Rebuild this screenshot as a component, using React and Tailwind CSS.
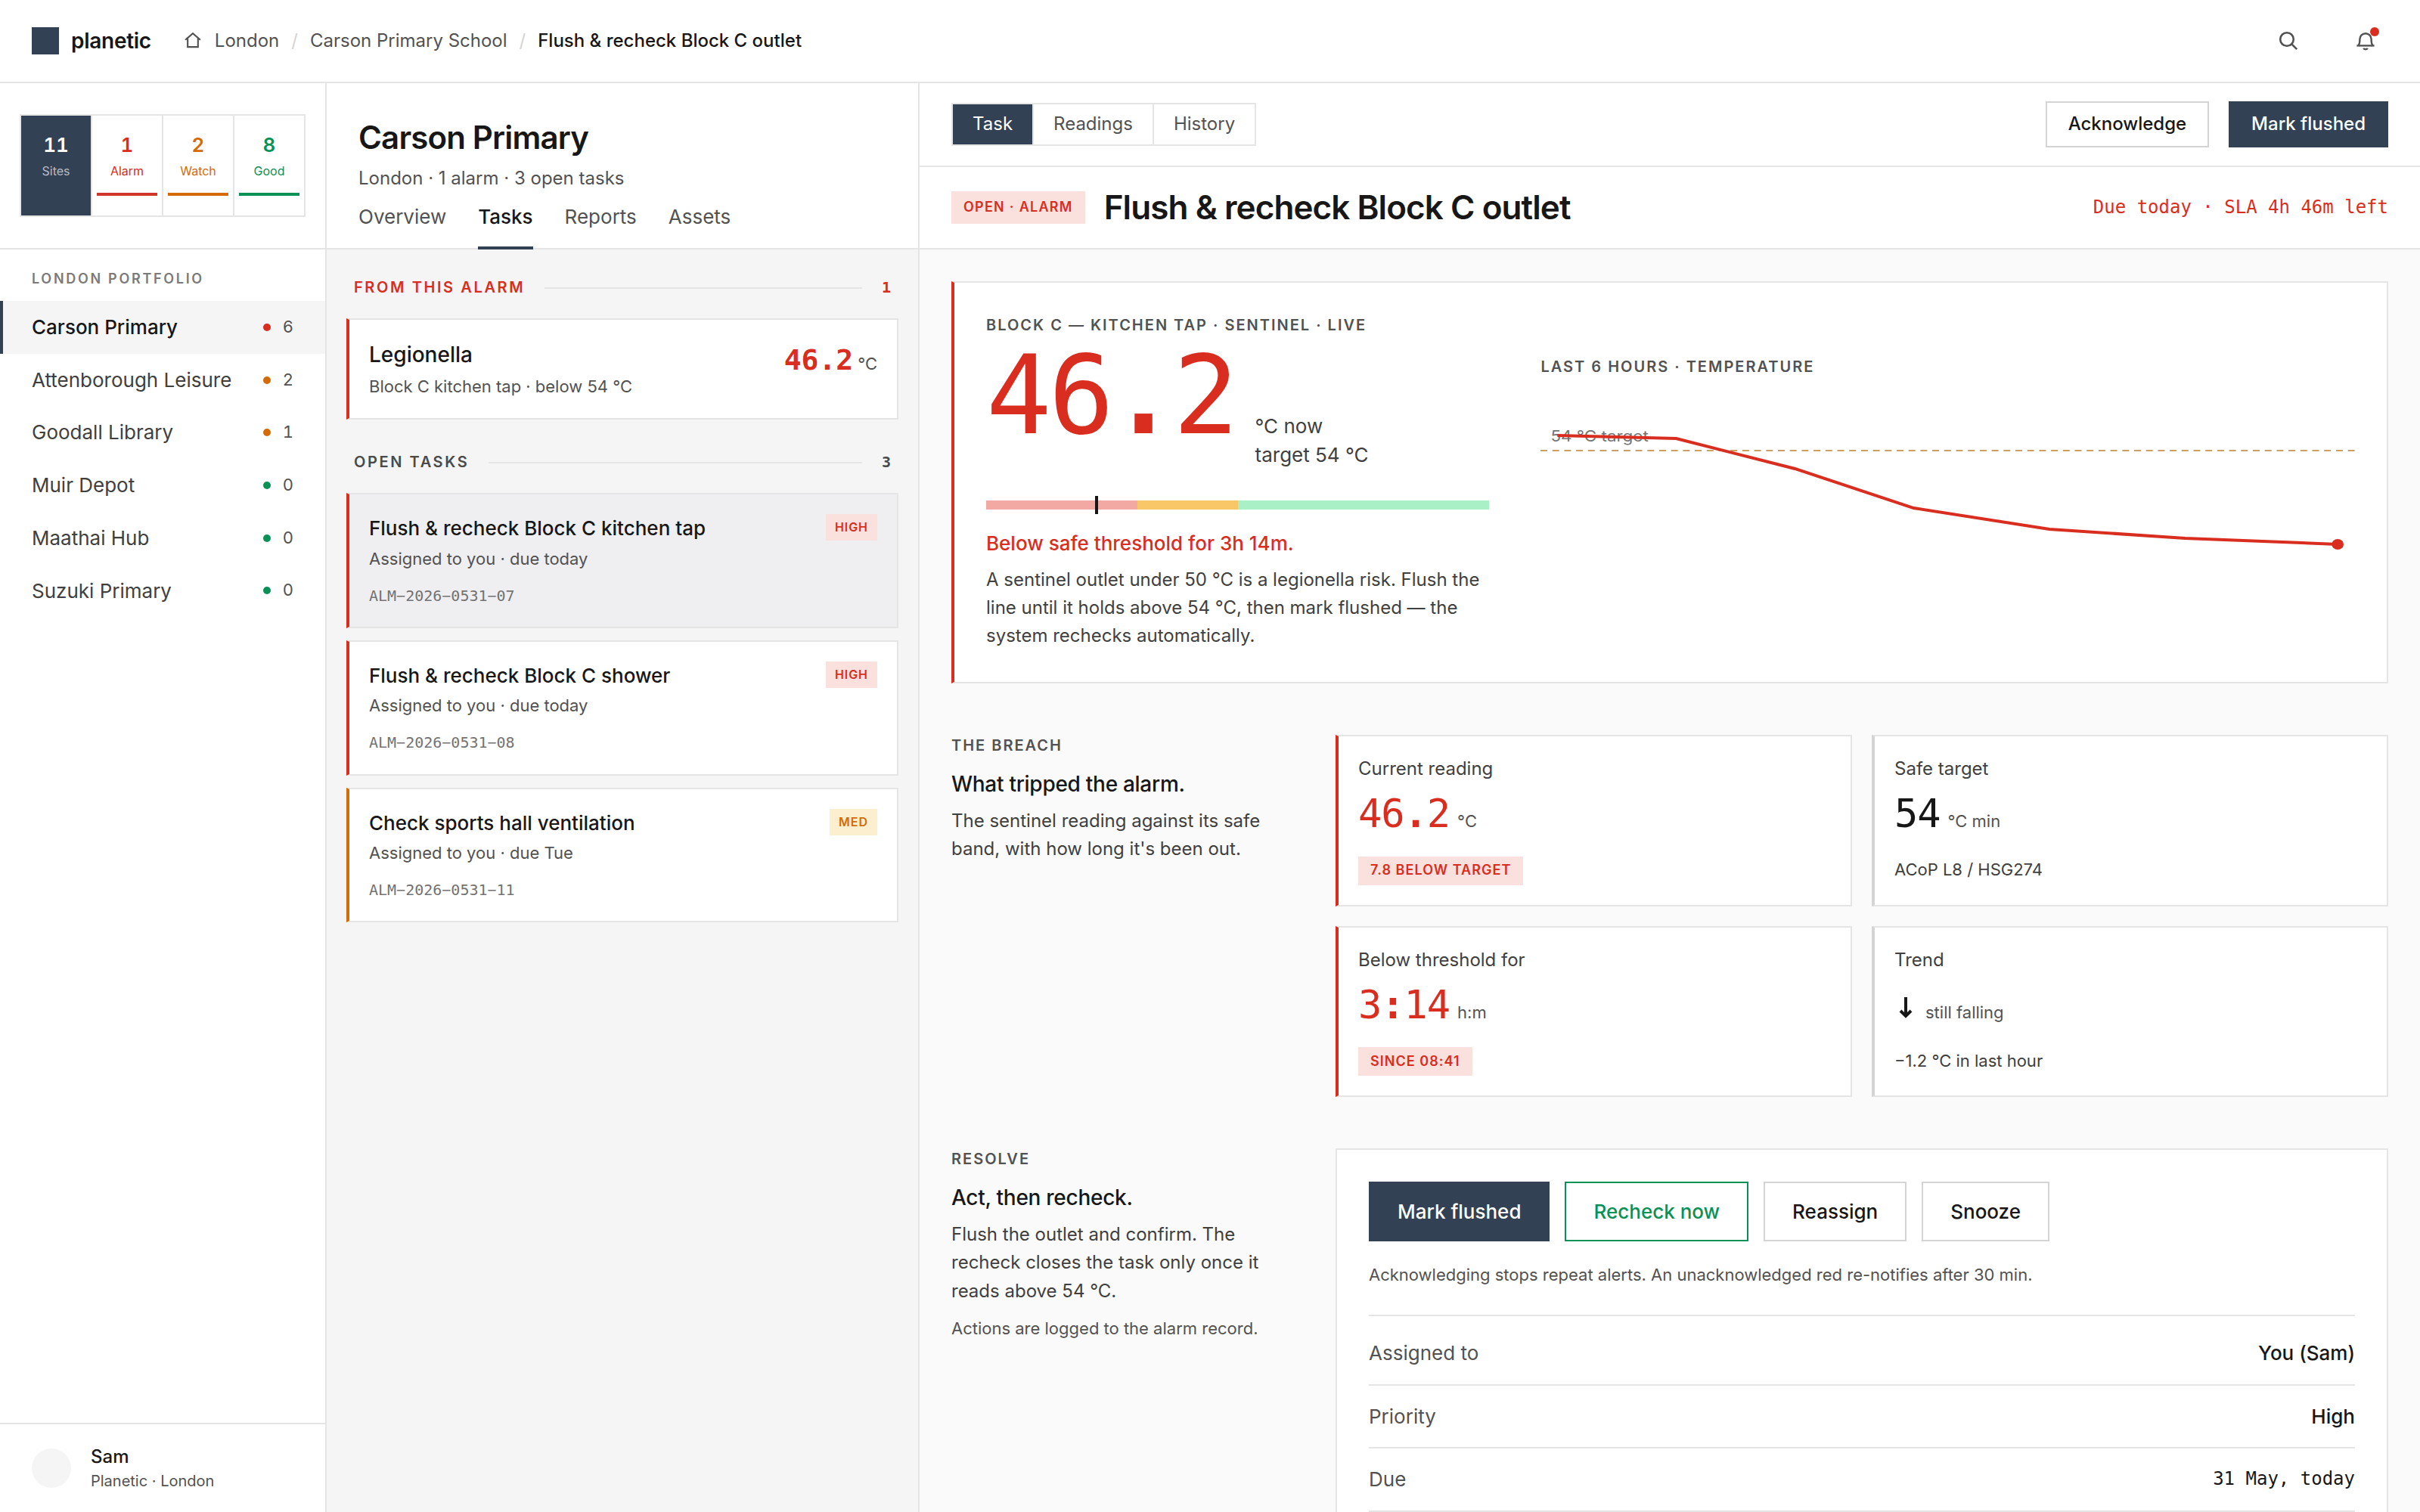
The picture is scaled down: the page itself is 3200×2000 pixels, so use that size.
import React from "react";

const mono = "font-['DejaVu_Sans_Mono',monospace]";

const stats = [
  { value: "1", label: "Alarm", text: "text-[#d92d20]", bar: "bg-[#d0342a]" },
  { value: "2", label: "Watch", text: "text-[#d46b08]", bar: "bg-[#d46b08]" },
  { value: "8", label: "Good", text: "text-[#0a9156]", bar: "bg-[#0a9156]" },
];

const sites = [
  { name: "Carson Primary", count: 6, dot: "bg-[#d92d20]", active: true },
  { name: "Attenborough Leisure", count: 2, dot: "bg-[#d46b08]" },
  { name: "Goodall Library", count: 1, dot: "bg-[#d46b08]" },
  { name: "Muir Depot", count: 0, dot: "bg-[#0a9156]" },
  { name: "Maathai Hub", count: 0, dot: "bg-[#0a9156]" },
  { name: "Suzuki Primary", count: 0, dot: "bg-[#0a9156]" },
];

const tasks = [
  {
    id: "ALM−2026−0531−07",
    title: "Flush & recheck Block C kitchen tap",
    meta: "Assigned to you · due today",
    priority: "HIGH",
    active: true,
  },
  {
    id: "ALM−2026−0531−08",
    title: "Flush & recheck Block C shower",
    meta: "Assigned to you · due today",
    priority: "HIGH",
  },
  {
    id: "ALM−2026−0531−11",
    title: "Check sports hall ventilation",
    meta: "Assigned to you · due Tue",
    priority: "MED",
  },
];

const details = [
  { label: "Assigned to", value: "You (Sam)" },
  { label: "Priority", value: "High" },
  { label: "Due", value: "31 May, today", mono: true },
];

const HomeIcon = () => (
  <svg width="26" height="26" viewBox="0 0 16 16" fill="none" stroke="currentColor" strokeWidth="1.3">
    <path d="M1.9 7.2L8 1.9L14.1 7.2" />
    <path d="M3.8 5.8V13H12.2V5.8" />
  </svg>
);

const SearchIcon = () => (
  <svg width="32" height="32" viewBox="0 0 16 16" fill="none" stroke="currentColor" strokeWidth="1.3">
    <circle cx="7" cy="7" r="4.4" />
    <path d="M10.3 10.3L13.6 13.6" />
  </svg>
);

const BellIcon = () => (
  <svg width="32" height="32" viewBox="0 0 16 16" fill="none" stroke="currentColor" strokeWidth="1.2">
    <path d="M3.2 11.2C4 10.3 4.2 9.4 4.2 6.9a3.8 3.8 0 0 1 7.6 0c0 2.5.2 3.4 1 4.3" />
    <path d="M2.2 11.2H13.8" />
    <path d="M6.6 12.9a1.5 1.1 0 0 0 2.8 0" />
  </svg>
);

const TopBar = () => (
  <header className="flex h-[110px] shrink-0 items-center border-b-2 border-[#e5e5e5] bg-white px-[42px]">
    <div className="size-9 bg-[#334155]" />
    <span className="ml-4 text-[28px] font-semibold tracking-[-0.01em]">planetic</span>
    <nav className="ml-[42px] flex items-center gap-4 text-[24px] text-[#525252]">
      <HomeIcon />
      <span>London</span>
      <span className="text-[#d4d4d4]">/</span>
      <span>Carson Primary School</span>
      <span className="text-[#d4d4d4]">/</span>
      <span className="font-medium text-[#171717]">Flush &amp; recheck Block C outlet</span>
    </nav>
    <div className="ml-auto flex gap-[42px] text-[#525252]">
      <button className="flex size-[60px] items-center justify-center">
        <SearchIcon />
      </button>
      <button className="relative flex size-[60px] items-center justify-center">
        <BellIcon />
        <span className="absolute top-3 right-3 size-3 rounded-full bg-[#d92d20]" />
      </button>
    </div>
  </header>
);

const Sidebar = () => (
  <aside className="flex w-[432px] shrink-0 flex-col border-r-2 border-[#e5e5e5] bg-white">
    <div className="flex h-[220px] shrink-0 items-center border-b-2 border-[#e5e5e5] px-[26px]">
      <div className="grid h-[136px] w-full grid-cols-4 gap-0.5 border-2 border-[#e5e5e5] bg-[#e5e5e5] text-center">
        <div className="bg-[#334155] pt-5">
          <div className="text-[26px] font-semibold tabular-nums text-white">11</div>
          <div className="mt-1 text-[16px] text-[#b6bcc6]">Sites</div>
        </div>
        {stats.map((s) => (
          <div key={s.label} className={`bg-white px-1.5 pt-5 ${s.text}`}>
            <div className="text-[26px] font-semibold tabular-nums">{s.value}</div>
            <div className="mt-1 text-[16px]">{s.label}</div>
            <div className={`mt-[17px] h-1 ${s.bar}`} />
          </div>
        ))}
      </div>
    </div>

    <div className="px-[42px] pt-[26px] text-[18px] font-semibold tracking-[0.15em] text-[#7a7a7a]">
      LONDON PORTFOLIO
    </div>
    <ul className="mt-4">
      {sites.map((site) => (
        <li
          key={site.name}
          className={`flex h-[69.7px] items-center border-l-4 pr-[42px] pl-[38px] ${
            site.active ? "border-[#334155] bg-[#f5f5f5]" : "border-transparent"
          }`}
        >
          <span className={`text-[26px] ${site.active ? "font-medium text-[#171717]" : "text-[#404040]"}`}>
            {site.name}
          </span>
          <span className={`mr-4 ml-auto size-2.5 rounded-full ${site.dot}`} />
          <span className="text-[22px] tabular-nums text-[#525252]">{site.count}</span>
        </li>
      ))}
    </ul>

    <div className="mt-auto flex h-[118px] items-center gap-[26px] border-t-2 border-[#e5e5e5] px-[42px]">
      <div className="size-[52px] rounded-full bg-[#f5f5f5]" />
      <div>
        <div className="text-[24px] font-medium">Sam</div>
        <div className="text-[20px] text-[#525252]">Planetic · London</div>
      </div>
    </div>
  </aside>
);

const ListHeading = ({ label, count, color }) => (
  <div className={`mb-[26px] flex h-[29px] items-center px-2.5 text-[20px] font-semibold ${color}`}>
    <span className="tracking-[0.13em]">{label}</span>
    <span className="mx-[26px] h-0.5 flex-1 bg-[#e5e5e5]" />
    <span className={mono}>{count}</span>
  </div>
);

const PriorityBadge = ({ level }) => (
  <span
    className={`flex h-[35px] items-center px-3 text-[16px] font-semibold tracking-[0.06em] ${
      level === "HIGH" ? "bg-[#fbe1de] text-[#d92d20]" : "bg-[#fcefd0] text-[#d46b08]"
    }`}
  >
    {level}
  </span>
);

const TaskColumn = () => (
  <section className="flex w-[784px] shrink-0 flex-col border-r-2 border-[#e5e5e5] bg-[#f5f5f5]">
    <div className="flex h-[220px] shrink-0 flex-col border-b-2 border-[#e5e5e5] bg-white px-[42px] pt-[42px]">
      <h1 className="text-[42px] leading-[60px] font-semibold tracking-[-0.02em]">Carson Primary</h1>
      <p className="mt-[6px] text-[24px] leading-[36px] text-[#525252]">London · 1 alarm · 3 open tasks</p>
      <nav className="mt-auto -mb-0.5 flex gap-[42px] text-[26px] text-[#525252]">
        <span className="h-[62px]">Overview</span>
        <span className="h-[62px] border-b-4 border-[#334155] font-medium text-[#171717]">Tasks</span>
        <span className="h-[62px]">Reports</span>
        <span className="h-[62px]">Assets</span>
      </nav>
    </div>

    <div className="px-[26px] pt-9">
      <ListHeading label="FROM THIS ALARM" count="1" color="text-[#d92d20]" />
      <div className="mb-[42px] flex h-[134px] justify-between border-2 border-l-4 border-[#e5e5e5] border-l-[#d92d20] bg-white p-[26px]">
        <div>
          <div className="text-[28px] leading-[40.6px] font-medium">Legionella</div>
          <div className="mt-1.5 text-[22px] text-[#525252]">Block C kitchen tap · below 54 °C</div>
        </div>
        <div className="flex items-baseline gap-1.5 leading-[54px]">
          <span className={`${mono} text-[38px] font-bold text-[#d92d20]`}>46.2</span>
          <span className="text-[22px] text-[#525252]">°C</span>
        </div>
      </div>

      <ListHeading label="OPEN TASKS" count="3" color="text-[#4a4a4a]" />
      <div className="flex flex-col gap-4">
        {tasks.map((task) => (
          <div
            key={task.id}
            className={`h-[178.8px] border-2 border-l-4 border-[#e5e5e5] p-[26px] ${
              task.priority === "HIGH" ? "border-l-[#d92d20]" : "border-l-[#d46b08]"
            } ${task.active ? "bg-[#efeff1]" : "bg-white"}`}
          >
            <div className="flex items-start justify-between">
              <span className="text-[26px] font-medium">{task.title}</span>
              <PriorityBadge level={task.priority} />
            </div>
            <div className="mt-1.5 text-[22px] text-[#525252]">{task.meta}</div>
            <div className={`${mono} mt-[18px] text-[20px] text-[#737373]`}>{task.id}</div>
          </div>
        ))}
      </div>
    </div>
  </section>
);

const Eyebrow = ({ children }) => (
  <div className="text-[20px] leading-[28px] font-semibold tracking-[0.1em] text-[#525252]">{children}</div>
);

// Large readout with a heavier separator between the digits
const Readout = ({ left, sep, right }) => (
  <>
    {left}
    <span className="font-bold">{sep}</span>
    {right}
  </>
);

const TrendChart = () => (
  <svg viewBox="0 0 480 140" preserveAspectRatio="none" className="mt-[25px] h-[280px] w-full">
    <line x1="0" y1="36" x2="480" y2="36" stroke="#cb9f66" strokeWidth="1" strokeDasharray="4 3" />
    <text x="6" y="30" fontSize="10" fill="#737373">
      54 °C target
    </text>
    <polyline
      points="10,26 80,28 150,48 220,74 300,88 380,94 470,98"
      fill="none"
      stroke="#d92d20"
      strokeWidth="2"
    />
    <circle cx="470" cy="98" r="3.5" fill="#d92d20" />
  </svg>
);

const Hero = () => (
  <div className="grid h-[532px] grid-cols-[1fr_1.618fr] gap-[68px] border-2 border-l-4 border-[#e5e5e5] border-l-[#d92d20] bg-white p-[42px]">
    <div>
      <Eyebrow>BLOCK C — KITCHEN TAP · SENTINEL · LIVE</Eyebrow>
      <div className="mt-[7px] flex items-baseline gap-[26px]">
        <span className={`${mono} text-[144px] leading-[144px] tracking-[-0.03em] text-[#d92d20]`}>
          <Readout left="46" sep="." right="2" />
        </span>
        <span className="text-[26px] text-[#404040]">
          °C now
          <br />
          target 54 °C
        </span>
      </div>
      <div className="relative mt-[42px] flex h-3">
        <div className="w-[30%] bg-[#f2a8a3]" />
        <div className="w-[20%] bg-[#f9c767]" />
        <div className="w-1/2 bg-[#aaf0c6]" />
        <div className="absolute -top-1.5 left-[21.7%] h-6 w-1 bg-[#171717]" />
      </div>
      <p className="mt-[26px] text-[26px] font-medium text-[#d92d20]">Below safe threshold for 3h 14m.</p>
      <p className="mt-2.5 text-[24px] leading-[1.55] text-[#404040]">
        A sentinel outlet under 50 °C is a legionella risk. Flush the line until it holds above 54 °C, then mark flushed
        — the system rechecks automatically.
      </p>
    </div>
    <div className="flex flex-col justify-center pb-px">
      <Eyebrow>LAST 6 HOURS · TEMPERATURE</Eyebrow>
      <TrendChart />
    </div>
  </div>
);

const MetricCard = ({ label, value, unit, alert, badge, note }) => (
  <div
    className={`h-[226.6px] border-2 border-l-4 border-[#e5e5e5] bg-white p-[26px] ${
      alert ? "border-l-[#d92d20]" : "border-l-[#d4d4d4]"
    }`}
  >
    <div className="text-[24px] leading-[34px] text-[#404040]">{label}</div>
    <div className="mt-[11px] flex h-[62px] items-baseline gap-2.5">
      <span className={`${mono} text-[52px] leading-[63px] tracking-[-0.02em] ${alert ? "text-[#d92d20]" : ""}`}>
        {value}
      </span>
      <span className="text-[22px] text-[#525252]">{unit}</span>
    </div>
    {badge && (
      <span className="mt-[25.5px] inline-flex h-[38px] items-center bg-[#fbe1de] px-4 text-[18px] font-semibold tracking-[0.058em] text-[#d92d20]">
        {badge}
      </span>
    )}
    {note && <div className="mt-[28px] text-[22px] text-[#404040]">{note}</div>}
  </div>
);

const DownArrow = () => (
  <svg width="31" height="28" viewBox="0 0 31 28" fill="none" stroke="#171717" className="inline-block align-baseline">
    <path d="M15 0V25" strokeWidth="4" />
    <path d="M8 18L15 25L22 18" strokeWidth="4" />
  </svg>
);

const SectionIntro = ({ eyebrow, title, text, note }) => (
  <div>
    <Eyebrow>{eyebrow}</Eyebrow>
    <h3 className="mt-[18px] text-[28px] leading-[39px] font-medium tracking-[-0.01em]">{title}</h3>
    <p className="mt-2.5 text-[24px] leading-[1.55] text-[#404040]">{text}</p>
    {note && <p className="mt-4 text-[22px] text-[#525252]">{note}</p>}
  </div>
);

const Detail = () => (
  <main className="flex min-w-0 flex-1 flex-col bg-[#fafafa]">
    <div className="flex h-[111px] shrink-0 items-center justify-between border-b-2 border-[#e5e5e5] bg-white px-[42px]">
      <div className="flex h-[57px] border-2 border-[#e5e5e5] text-[24px] text-[#525252]">
        <span className="flex items-center border-r-2 border-[#e5e5e5] bg-[#334155] px-[26px] text-white">Task</span>
        <span className="flex items-center border-r-2 border-[#e5e5e5] px-[26px]">Readings</span>
        <span className="flex items-center px-[26px]">History</span>
      </div>
      <div className="flex gap-[26px] text-[24px] font-medium">
        <button className="h-[61px] border-2 border-[#d4d4d4] px-7">Acknowledge</button>
        <button className="h-[61px] border-2 border-[#334155] bg-[#334155] px-7 text-white">Mark flushed</button>
      </div>
    </div>

    <div className="flex h-[109px] shrink-0 items-center border-b-2 border-[#e5e5e5] bg-white px-[42px]">
      <span className="flex h-[43px] items-center bg-[#fbe1de] px-4 text-[18px] font-semibold tracking-[0.07em] text-[#d92d20]">
        OPEN · ALARM
      </span>
      <h2 className="ml-[25px] text-[44px] font-semibold tracking-[-0.021em]">Flush &amp; recheck Block C outlet</h2>
      <span className={`${mono} ml-auto text-[24px] text-[#d92d20]`}>Due today · SLA 4h 46m left</span>
    </div>

    <div className="flex flex-col gap-[68px] px-[42px] pt-[42px]">
      <Hero />

      <section className="grid grid-cols-[440px_1fr] gap-[68px]">
        <SectionIntro
          eyebrow="THE BREACH"
          title="What tripped the alarm."
          text="The sentinel reading against its safe band, with how long it's been out."
        />
        <div className="grid grid-cols-2 gap-[26px]">
          <MetricCard
            label="Current reading"
            value={<Readout left="46" sep="." right="2" />}
            unit="°C"
            alert
            badge="7.8 BELOW TARGET"
          />
          <MetricCard label="Safe target" value="54" unit="°C min" note="ACoP L8 / HSG274" />
          <MetricCard
            label="Below threshold for"
            value={<Readout left="3" sep=":" right="14" />}
            unit="h:m"
            alert
            badge="SINCE 08:41"
          />
          <MetricCard label="Trend" value={<DownArrow />} unit="still falling" note="−1.2 °C in last hour" />
        </div>
      </section>

      <section className="grid grid-cols-[440px_1fr] gap-[68px]">
        <SectionIntro
          eyebrow="RESOLVE"
          title="Act, then recheck."
          text="Flush the outlet and confirm. The recheck closes the task only once it reads above 54 °C."
          note="Actions are logged to the alarm record."
        />
        <div className="border-2 border-[#e5e5e5] bg-white p-[42px]">
          <div className="flex gap-5 text-[26px] font-medium">
            <button className="h-[79px] border-2 border-[#334155] bg-[#334155] px-9 text-white">Mark flushed</button>
            <button className="h-[79px] border-2 border-[#0a9156] px-9 text-[#0a9156]">Recheck now</button>
            <button className="h-[79px] border-2 border-[#d4d4d4] px-9">Reassign</button>
            <button className="h-[79px] border-2 border-[#d4d4d4] px-9">Snooze</button>
          </div>
          <p className="mt-[29px] text-[22px] text-[#525252]">
            Acknowledging stops repeat alerts. An unacknowledged red re-notifies after 30 min.
          </p>
          <div className="mt-9 border-t-2 border-[#e5e5e5] pt-2">
            {details.map((row) => (
              <div
                key={row.label}
                className="flex h-[83.7px] items-center justify-between border-b-2 border-[#e5e5e5] text-[26px]"
              >
                <span className="text-[#525252]">{row.label}</span>
                {row.mono ? (
                  <span className={`${mono} mb-0.5 text-[24px]`}>{row.value}</span>
                ) : (
                  <span className="font-medium">{row.value}</span>
                )}
              </div>
            ))}
          </div>
        </div>
      </section>
    </div>
  </main>
);

const App = () => {
  return (
    <div className="flex h-[2000px] w-[3200px] flex-col overflow-hidden bg-white font-['Inter',sans-serif] leading-[1.45] text-[#171717]">
      <TopBar />
      <div className="flex min-h-0 flex-1">
        <Sidebar />
        <TaskColumn />
        <Detail />
      </div>
    </div>
  );
};

export default App;
